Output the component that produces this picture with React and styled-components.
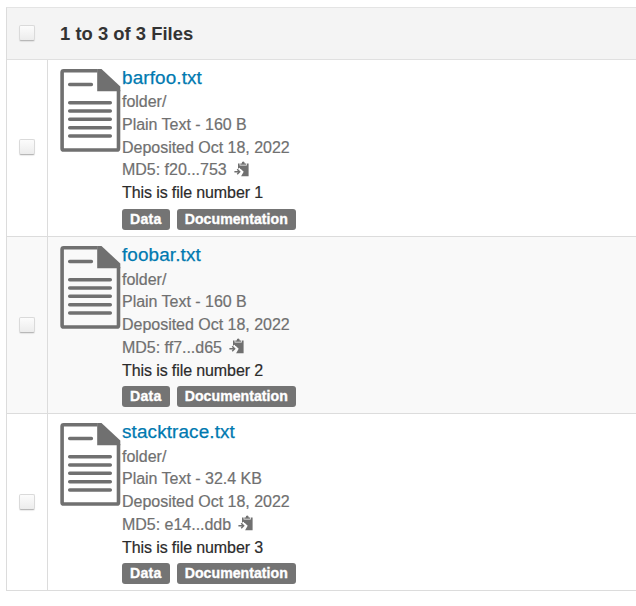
import React from "react";
import styled, { createGlobalStyle } from "styled-components";

const GlobalStyle = createGlobalStyle`
  *, *::before, *::after { box-sizing: border-box; }
  body {
    margin: 0;
    background: #fff;
    overflow: hidden;
    font-family: "Liberation Sans", Arial, sans-serif;
    color: #333;
  }
`;

const Table = styled.section`
  margin: 7px 0 0 6px;
  width: 630px;
  border-top: 1px solid #e4e4e4;
  border-left: 1px solid #dcdcdc;
`;

const Header = styled.header`
  display: flex;
  align-items: center;
  height: 52px;
  background: #f4f4f4;
  border-bottom: 1px solid #e0e0e0;
`;

const HeaderTitle = styled.h2`
  margin: 0 0 0 12px;
  font-size: 18.4px;
  line-height: 24px;
  font-weight: 700;
  letter-spacing: 0.02px;
  color: #333;
`;

const Row = styled.article`
  display: flex;
  height: 177px;
  background: ${(p) => (p.$striped ? "#f9f9f9" : "#fff")};
  border-bottom: 1px solid #dcdcdc;
`;

const CheckCell = styled.div`
  flex: none;
  width: 41px;
  display: flex;
  align-items: center;
  justify-content: center;
  padding-bottom: ${(p) => p.$lift ?? 1}px;
  border-right: 1px solid ${(p) => (p.$plain ? "transparent" : "#dcdcdc")};
`;

const Checkbox = styled.input.attrs({ type: "checkbox" })`
  appearance: none;
  margin: 0;
  width: 16px;
  height: 16px;
  border: 1px solid #dadada;
  border-bottom-color: #b8b8b8;
  border-radius: 2px;
  background: linear-gradient(#fcfcfc, #ececec);
  box-shadow: 0 1px 1px rgba(0, 0, 0, 0.08);
`;

const FileCell = styled.div`
  display: flex;
  align-items: flex-start;
  padding: 8px 0 0 12px;
`;

const DocIcon = styled.svg`
  flex: none;
  display: block;
  width: 62px;
  height: 85px;
  margin-top: ${(p) => p.$drop}px;
`;

const Details = styled.div`
  display: flex;
  flex-direction: column;
  align-items: flex-start;
`;

const FileLink = styled.a`
  height: ${(p) => 23.4 + p.$drop}px;
  font-size: 18.9px;
  line-height: 19px;
  letter-spacing: 0.12px;
  color: #0079b0;
  -webkit-text-stroke: 0.25px #0079b0;
  text-decoration: none;
`;

const Line = styled.div`
  display: flex;
  align-items: center;
  height: 22.7px;
  font-size: 16px;
  line-height: 22.7px;
  white-space: nowrap;
  letter-spacing: ${(p) => (p.$strong ? "-0.1px" : "-0.02px")};
  color: ${(p) => (p.$strong ? "#2b2b2b" : "#707070")};
  -webkit-text-stroke: 0.2px currentColor;
`;

const CopyIcon = styled.svg`
  display: block;
  margin: -4px 0 0 7px;
  width: 15px;
  height: 16px;
`;

const Tags = styled.div`
  display: flex;
  gap: 7px;
  margin-top: ${(p) => 4 - p.$drop}px;
`;

const Tag = styled.span`
  height: 21px;
  padding: 0 8px;
  border-radius: 3px;
  background: #747474;
  color: #fff;
  font-size: 14.1px;
  line-height: 20px;
  font-weight: 700;
  letter-spacing: ${(p) => (p.$short ? "0.3px" : "0.04px")};
  -webkit-text-stroke: 0.35px #fff;
`;

const files = [
  { name: "barfoo.txt", size: "160 B", hash: "f20...753", note: "This is file number 1", drop: 0, lift: 3 },
  { name: "foobar.txt", size: "160 B", hash: "ff7...d65", note: "This is file number 2", drop: 0.4, lift: 1 },
  { name: "stacktrace.txt", size: "32.4 KB", hash: "e14...ddb", note: "This is file number 3", drop: 0.4, lift: 1 },
];

function DocumentGlyph({ drop }) {
  return (
    <DocIcon $drop={drop} viewBox="0 0 62 85" fill="none" aria-hidden="true">
      <path d="M37.5 2.8H3.7Q2.1 2.8 2.1 4.4V80.4Q2.1 82 3.7 82H56.9Q58.5 82 58.5 80.4V22" stroke="#707070" strokeWidth="3.6" />
      <path d="M37.2 1H41.5L60.3 18.5V23.3H37.2Z" fill="#707070" />
      <path d="M9.7 16.4H31.4M9.7 34.7H50.3M9.7 43.1H50.3M9.7 51.3H50.3M9.7 59.7H50.3M9.7 68H50.3" stroke="#707070" strokeWidth="3.5" strokeLinecap="round" />
    </DocIcon>
  );
}

function ClipboardGlyph() {
  return (
    <CopyIcon viewBox="0 0 15 16" aria-hidden="true">
      <path d="M4 2.4H5.6V4.6H12.8V2.4H14.6V15.2H7.1L9.7 10.7L5.5 6.7L4 7.8Z" fill="#707070" />
      <path d="M5 5H14V8H6.5Z" fill="#707070" />
      <path d="M6.3 3.8V2.4H7.7Q7.7.5 9.2.5Q10.7.5 10.7 2.4H12.1V3.8Z" fill="#707070" />
      <path d="M.4 10.7H5M3.2 8.2L5.7 10.7L3.2 13.2" fill="none" stroke="#707070" strokeWidth="1.4" />
    </CopyIcon>
  );
}

function FileRow({ file, striped }) {
  return (
    <Row $striped={striped}>
      <CheckCell $lift={file.lift}><Checkbox aria-label={file.name} /></CheckCell>
      <FileCell>
        <DocumentGlyph drop={file.drop} />
        <Details>
          <FileLink $drop={file.drop}>{file.name}</FileLink>
          <Line>folder/</Line>
          <Line>Plain Text - {file.size}</Line>
          <Line>Deposited Oct 18, 2022</Line>
          <Line>MD5: {file.hash}<ClipboardGlyph /></Line>
          <Line $strong>{file.note}</Line>
          <Tags $drop={file.drop}><Tag $short>Data</Tag><Tag>Documentation</Tag></Tags>
        </Details>
      </FileCell>
    </Row>
  );
}

export default function App() {
  return (
    <>
      <GlobalStyle />
      <Table>
        <Header>
          <CheckCell $plain><Checkbox aria-label="Select all files" /></CheckCell>
          <HeaderTitle>1 to 3 of 3 Files</HeaderTitle>
        </Header>
        {files.map((file, i) => <FileRow key={file.name} file={file} striped={i % 2 === 1} />)}
      </Table>
    </>
  );
}
